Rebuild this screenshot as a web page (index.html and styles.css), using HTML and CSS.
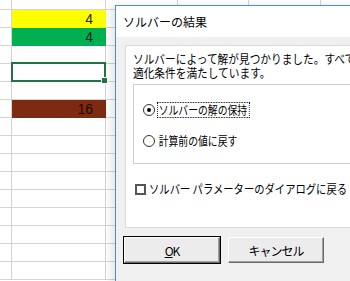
FILE: index.html
```html
<!DOCTYPE html>
<html lang="ja">
<head>
  <meta charset="UTF-8" />
  <title>ソルバーの結果</title>
  <link rel="stylesheet" href="styles.css">
</head>
<body>
  <div class="sheet">
    <div class="row first"><div class="c0"></div><div class="c1"></div><div class="c2"></div><div class="c3"></div><div class="c4"></div><div class="c5"></div></div>
    <div class="row"><div class="c0"></div><div class="c1 fill yellow">4</div><div class="c2"></div><div class="c3"></div><div class="c4"></div><div class="c5"></div></div>
    <div class="row"><div class="c0"></div><div class="c1 fill green">4</div><div class="c2"></div><div class="c3"></div><div class="c4"></div><div class="c5"></div></div>
    <div class="row"><div class="c0"></div><div class="c1"></div><div class="c2"></div><div class="c3"></div><div class="c4"></div><div class="c5"></div></div>
    <div class="row"><div class="c0"></div><div class="c1 active"></div><div class="c2"></div><div class="c3"></div><div class="c4"></div><div class="c5"></div></div>
    <div class="row"><div class="c0"></div><div class="c1"></div><div class="c2"></div><div class="c3"></div><div class="c4"></div><div class="c5"></div></div>
    <div class="row"><div class="c0"></div><div class="c1 fill brown">16</div><div class="c2"></div><div class="c3"></div><div class="c4"></div><div class="c5"></div></div>
    <div class="row"><div class="c0"></div><div class="c1"></div><div class="c2"></div><div class="c3"></div><div class="c4"></div><div class="c5"></div></div>
    <div class="row"><div class="c0"></div><div class="c1"></div><div class="c2"></div><div class="c3"></div><div class="c4"></div><div class="c5"></div></div>
    <div class="row"><div class="c0"></div><div class="c1"></div><div class="c2"></div><div class="c3"></div><div class="c4"></div><div class="c5"></div></div>
    <div class="row"><div class="c0"></div><div class="c1"></div><div class="c2"></div><div class="c3"></div><div class="c4"></div><div class="c5"></div></div>
    <div class="row"><div class="c0"></div><div class="c1"></div><div class="c2"></div><div class="c3"></div><div class="c4"></div><div class="c5"></div></div>
    <div class="row"><div class="c0"></div><div class="c1"></div><div class="c2"></div><div class="c3"></div><div class="c4"></div><div class="c5"></div></div>
    <div class="row"><div class="c0"></div><div class="c1"></div><div class="c2"></div><div class="c3"></div><div class="c4"></div><div class="c5"></div></div>
    <div class="row"><div class="c0"></div><div class="c1"></div><div class="c2"></div><div class="c3"></div><div class="c4"></div><div class="c5"></div></div>
    <div class="row"><div class="c0"></div><div class="c1"></div><div class="c2"></div><div class="c3"></div><div class="c4"></div><div class="c5"></div></div>
  </div>

  <!-- solver result dialog, sits over the sheet -->
  <div class="dialog">
    <div class="titlebar">ソルバーの結果</div>
    <div class="dlg-body">
      <div class="panel">
        <div class="message">
          <div>ソルバーによって解が見つかりました。すべての制約条件と最</div>
          <div>適化条件を満たしています。</div>
        </div>
        <div class="group">
          <div class="option">
            <span class="radio checked"></span>
            <span class="label focus">ソルバーの解の保持</span>
          </div>
          <div class="option second">
            <span class="radio"></span>
            <span class="label">計算前の値に戻す</span>
          </div>
        </div>
        <div class="check-row">
          <span class="checkbox"></span>
          <span class="check-label">ソルバー パラメーターのダイアログに戻る</span>
        </div>
      </div>
      <div class="buttons">
        <button class="btn default"><u>O</u>K</button>
        <button class="btn">キャンセル</button>
      </div>
    </div>
  </div>
</body>
</html>
```

FILE: styles.css
```css
body {
  margin: 0;
  width: 350px;
  height: 281px;
  overflow: hidden;
  position: relative;
  background: #fff;
  font-family: "Liberation Sans", Arial, sans-serif;
}
.sheet {
  display: flex;
  flex-direction: column;
}
.row {
  display: flex;
  height: 18px;
  flex-shrink: 0;
}
.row.first {
  height: 10px;
}
.row > div {
  flex-shrink: 0;
  box-sizing: border-box;
  border-right: 1px solid #d4d4d4;
  border-bottom: 1px solid #d4d4d4;
}
.c0 { width: 12px; }
.c1 { width: 94px; }
.c2 { width: 72px; }
.c3 { width: 71px; }
.c4 { width: 72px; }
.c5 { width: 72px; }

.fill {
  font-size: 14px;
  line-height: 18px;
  text-align: right;
  padding-right: 12px;
  color: #222;
}
.row > .yellow { background: #ffff00; border-color: #ffff00; }
.row > .green { background: #00b050; border-color: #00b050; }
.row > .brown { background: #7e2a10; border-color: #7e2a10; color: #1a0a04; }

.active {
  position: relative;
}
.active::before {
  content: "";
  position: absolute;
  left: -1px;
  top: -2px;
  right: -1px;
  bottom: -1px;
  border: 2px solid #217346;
}
.active::after {
  content: "";
  position: absolute;
  right: -3px;
  bottom: -3px;
  width: 5px;
  height: 5px;
  background: #217346;
  border: 1px solid #fff;
}

/* dialog */
.dialog {
  position: absolute;
  left: 115px;
  top: 5px;
  width: 420px;
  height: 300px;
  border: 1px solid #4a8fdc;
  background: #f0f0f0;
  box-shadow: -4px 0 8px rgba(0, 0, 0, 0.1);
  font-family: "Noto Sans CJK JP", sans-serif;
  color: #000;
}
.titlebar {
  height: 31px;
  background: #fff;
  font-size: 12px;
  line-height: 31px;
  padding-left: 7px;
}
.dlg-body {
  padding: 8px 0 0 9px;
}
.panel {
  background: #fff;
  border: 1px solid #dadada;
  padding: 6px 0 0 7px;
  box-sizing: border-box;
  height: 183px;
}
.message {
  font-size: 12px;
  line-height: 14px;
  white-space: nowrap;
  transform: scaleX(0.89);
  transform-origin: left top;
}
.group {
  margin-top: 4px;
  height: 80px;
  box-sizing: border-box;
  border: 1px solid #cfcfcf;
  padding: 17px 0 0 9px;
}
.option {
  display: flex;
  align-items: center;
  height: 16px;
}
.option.second {
  margin-top: 15px;
}
.radio {
  width: 10px;
  height: 10px;
  border: 1px solid #333;
  border-radius: 50%;
  position: relative;
  background: #fff;
}
.radio.checked::after {
  content: "";
  position: absolute;
  left: 3px;
  top: 3px;
  width: 4px;
  height: 4px;
  border-radius: 50%;
  background: #000;
}
.label {
  margin-left: 2px;
  padding: 0 2px 0 1px;
  font-size: 12px;
  line-height: 14px;
  white-space: nowrap;
  border: 1px dotted transparent;
  transform: scaleX(0.82);
  transform-origin: left center;
}
.label.focus {
  border-color: #000;
}
.check-row {
  display: flex;
  align-items: center;
  margin-top: 18px;
  margin-left: 2px;
}
.checkbox {
  width: 7px;
  height: 7px;
  border: 2px solid #555;
  background: #fff;
}
.check-label {
  margin-left: 3px;
  font-size: 12px;
  line-height: 14px;
  white-space: nowrap;
  display: inline-block;
  transform: scaleX(0.86);
  transform-origin: left center;
}
.buttons {
  display: flex;
  gap: 8px;
  margin-top: 9px;
  margin-left: -1px;
}
.btn {
  width: 96px;
  height: 26px;
  background: #ececec;
  border: 1px solid;
  border-color: #fff #6a6a6a #6a6a6a #fff;
  box-shadow: inset -1px -1px 0 #a0a0a0;
  font-family: "Noto Sans CJK JP", sans-serif;
  font-size: 12px;
  letter-spacing: -1px;
  color: #000;
  padding: 0;
}
.btn.default {
  outline: 1px solid #000;
}
```
